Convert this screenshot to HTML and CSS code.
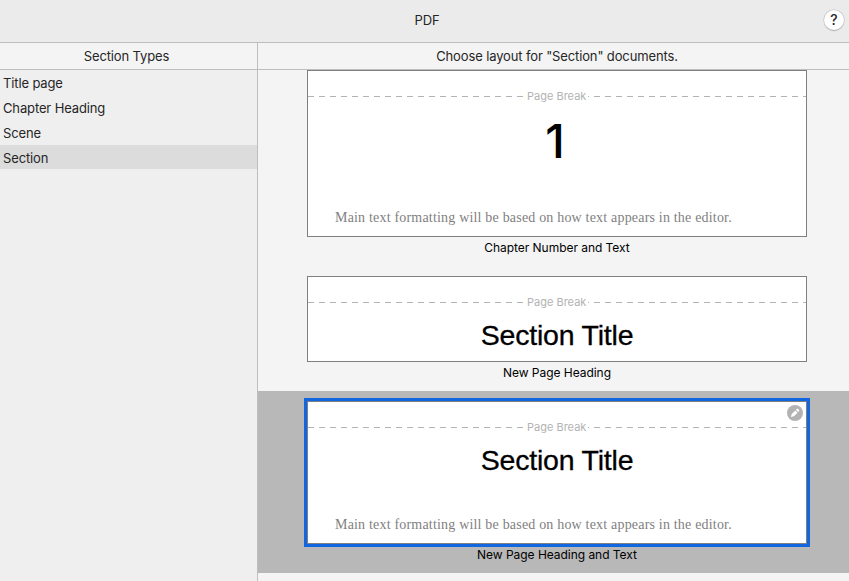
FILE: index.html
```
<!DOCTYPE html>
<html lang="en">
<head>
  <meta charset="UTF-8" />
  <meta name="viewport" content="width=device-width, initial-scale=1.0"/>
  <title>PDF</title>
  <link rel="stylesheet" href="styles.css">
</head>
<body>
  <header class="titlebar">
    <span class="title">PDF</span>
    <button type="button" class="help">?</button>
  </header>

  <div class="main">
    <aside class="sidebar">
      <div class="column-header">Section Types</div>
      <ul class="type-list">
        <li>Title page</li>
        <li>Chapter Heading</li>
        <li>Scene</li>
        <li class="selected">Section</li>
      </ul>
    </aside>

    <section class="layouts">
      <div class="column-header">Choose layout for "Section" documents.</div>

      <div class="layout first">
        <div class="card tall">
          <div class="page-break"><span>Page Break</span></div>
          <div class="number">1</div>
          <p class="body-text">Main text formatting will be based on how text appears in the editor.</p>
        </div>
        <div class="caption">Chapter Number and Text</div>
      </div>

      <div class="layout">
        <div class="card short">
          <div class="page-break"><span>Page Break</span></div>
          <div class="heading">Section Title</div>
        </div>
        <div class="caption">New Page Heading</div>
      </div>

      <div class="layout selected">
        <div class="card medium">
          <div class="page-break"><span>Page Break</span></div>
          <div class="heading">Section Title</div>
          <p class="body-text">Main text formatting will be based on how text appears in the editor.</p>
          <svg class="edit" viewBox="0 0 16 16" width="16" height="16">
            <circle cx="8" cy="8" r="8" fill="#b3b3b3"/>
            <path d="M3.900 12.100l.8-3.100 3.600-3.600 2.300 2.300L7 11.300z" fill="#fff"/>
            <path d="M8.900 4.800l.8-.8c.4-.4 1-.4 1.400 0l.9.9c.4.4.4 1 0 1.400l-.8.8z" fill="#fff"/>
          </svg>
        </div>
        <div class="caption">New Page Heading and Text</div>
      </div>
    </section>
  </div>
</body>
</html>
```
FILE: styles.css
```
* { box-sizing: border-box; }
body {
  margin: 0;
  height: 581px;
  display: flex;
  flex-direction: column;
  overflow: hidden;
  font-family: Inter, "Liberation Sans", sans-serif;
  font-size: 13px;
  letter-spacing: -0.13px;
  color: #262626;
  background: #f4f4f4;
}
.titlebar {
  height: 43px;
  flex: none;
  display: flex;
  align-items: center;
  padding: 0 5px 3px 30px;
  background: #ebebeb;
  border-bottom: 1px solid #bebec0;
}
.title {
  flex: 1;
  text-align: center;
}
.help {
  width: 20px;
  height: 20px;
  padding: 0;
  border: none;
  border-radius: 50%;
  background: #fff;
  box-shadow: 0 0 0 0.5px #bbb, 0 1px 1px #aaa;
  font: 500 14px/20px Inter, sans-serif;
  color: #262626;
}
.main {
  flex: 1;
  min-height: 0;
  display: flex;
}
.sidebar {
  width: 258px;
  flex: none;
  background: #efefef;
  border-right: 1px solid #bebec0;
}
.column-header {
  height: 27px;
  line-height: 27px;
  text-align: center;
  background: #f4f4f4;
  border-bottom: 1px solid #bebec0;
}
.sidebar .column-header { padding-right: 4px; }
.layouts .column-header { padding-left: 7px; }
.type-list {
  list-style: none;
  margin: 0;
  padding: 0;
}
.type-list li {
  height: 24px;
  line-height: 26px;
  margin-bottom: 1px;
  padding-left: 3px;
}
.type-list .selected { background: #dcdcdc; }
.layouts {
  flex: 1;
  background: #f4f4f4;
}
.layout {
  padding: 10px 42px 0 49px;
  height: 125px;
}
.layout.first {
  padding-top: 0;
  height: 196px;
}
.layout.selected {
  height: 182px;
  background: #b8b8b8;
}
.card {
  position: relative;
  width: 500px;
  padding-top: 17px;
  background: #fff;
  border: 1px solid #7f7f7f;
}
.tall { height: 167px; }
.short { height: 86px; }
.medium { height: 143px; }
.selected .card { box-shadow: 0 0 0 3px #1267e0; }
.page-break {
  height: 16px;
  display: flex;
  justify-content: center;
  background: repeating-linear-gradient(90deg, #b3b3b3 0 6px, transparent 6px 11px) 0 8px / 100% 1px no-repeat;
  font-size: 11px;
  letter-spacing: 0;
  line-height: 16px;
  color: #b3b3b3;
}
.page-break span {
  width: 63px;
  padding-left: 2px;
  margin-right: 1px;
  background: #fff;
  white-space: nowrap;
}
.number {
  height: 76px;
  padding: 9px 4px 0 0;
  text-align: center;
  font-size: 47px;
  line-height: 56px;
  font-weight: 500;
  color: #000;
}
.heading {
  height: 51px;
  padding-top: 8px;
  text-align: center;
  font-family: "Liberation Sans", Arial, sans-serif;
  font-size: 28.5px;
  letter-spacing: -0.2px;
  line-height: 34px;
  color: #000;
  -webkit-text-stroke: 0.3px #000;
}
.body-text {
  margin: 0 0 0 27px;
  padding-top: 27px;
  font-family: "Liberation Serif", "Times New Roman", serif;
  font-size: 14px;
  letter-spacing: 0.19px;
  line-height: 24px;
  color: #7f7f7f;
  white-space: nowrap;
}
.number + .body-text { padding-top: 26px; }
.edit {
  position: absolute;
  top: 3px;
  right: 3px;
}
.caption {
  width: 500px;
  text-align: center;
  font-size: 12px;
  letter-spacing: -0.04px;
  line-height: 22px;
  color: #000;
}
```
